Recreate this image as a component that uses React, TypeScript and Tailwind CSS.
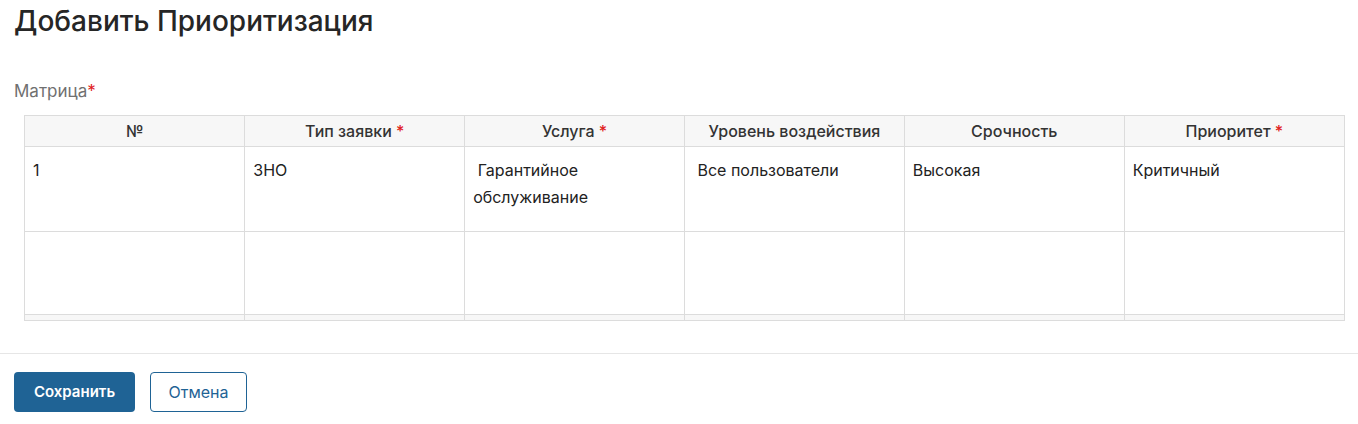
import React from 'react';

const columns = [
  { title: '№', required: false },
  { title: 'Тип заявки', required: true },
  { title: 'Услуга', required: true },
  { title: 'Уровень воздействия', required: false },
  { title: 'Срочность', required: false },
  { title: 'Приоритет', required: true },
];

const rows = [
  ['1', 'ЗНО', '\u00a0Гарантийное обслуживание', '\u00a0Все пользователи', 'Высокая', 'Критичный'],
  ['', '', '', '', '', ''],
];

export default function App() {
  return (
    <div className="min-h-screen bg-white text-[#222] font-['Inter',sans-serif]">
      {/* Header */}
      <div className="px-[14px] pt-[2px]">
        <h1 className="text-[28px] leading-[38px] font-medium text-[#262626]">Добавить Приоритизация</h1>

        {/* Matrix field */}
        <div className="mt-[41px] text-[17px] leading-[20px] text-[#707070]">
          Матрица<span className="text-[#e02020]">*</span>
        </div>

        <div className="mt-[14px] ml-[10px] w-[1321px] border border-[#dcdcdc]">
          <table className="w-full table-fixed border-collapse text-[16px]">
            <thead>
              <tr className="h-[30px] bg-[#f7f7f7]">
                {columns.map((c, i) => (
                  <th
                    key={i}
                    className="border-r border-[#dcdcdc] last:border-r-0 text-[16px] font-medium text-[#333] text-center"
                  >
                    {c.title}
                    {c.required && <span className="text-[#e02020]"> *</span>}
                  </th>
                ))}
              </tr>
            </thead>
            <tbody>
              {rows.map((r, ri) => (
                <tr key={ri} className={ri === 0 ? 'h-[85px]' : 'h-[83px]'}>
                  {r.map((cell, ci) => (
                    <td
                      key={ci}
                      className="border-t border-r border-[#dcdcdc] last:border-r-0 align-top px-[8px] pt-[10px] leading-[27px] text-[#222]"
                    >
                      {cell}
                    </td>
                  ))}
                </tr>
              ))}
              <tr className="h-[6px] bg-[#f7f7f7]">
                {columns.map((_, ci) => (
                  <td key={ci} className="border-t border-r border-[#dcdcdc] last:border-r-0 p-0" />
                ))}
              </tr>
            </tbody>
          </table>
        </div>
      </div>

      {/* Footer */}
      <div className="mt-[32px] border-t border-[#e6e6e6] px-[14px] pt-[18px] flex gap-[15px]">
        <button className="h-[40px] w-[121px] rounded-[4px] bg-[#1f6395] text-white text-[15px] font-semibold">
          Сохранить
        </button>
        <button className="h-[40px] w-[97px] rounded-[4px] border border-[#1f6395] bg-white text-[#1f6395] text-[16px]">
          Отмена
        </button>
      </div>
    </div>
  );
}
